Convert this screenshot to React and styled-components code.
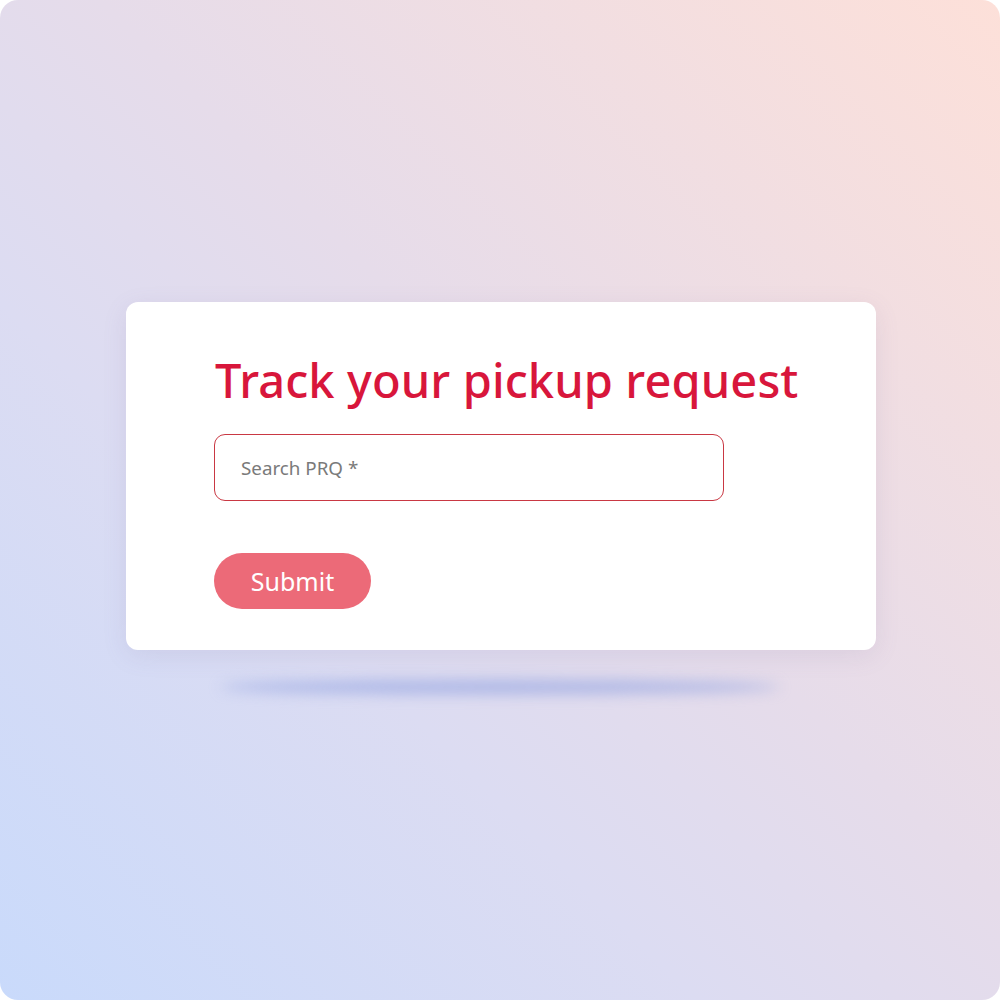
import React from "react";
import styled, { createGlobalStyle } from "styled-components";

const GlobalStyle = createGlobalStyle`
  html, body {
    margin: 0;
    padding: 0;
    background: #ffffff;
  }
  * {
    box-sizing: border-box;
  }
`;

const Page = styled.div`
  width: 1000px;
  height: 1000px;
  border-radius: 18px;
  overflow: hidden;
  background: linear-gradient(45deg, #c9dafb 0%, #dcdcf2 35%, #e6dcea 55%, #fde0d9 100%);
  display: flex;
  flex-direction: column;
  align-items: center;
  padding-top: 302px;
  font-family: "Noto Sans", "Open Sans", sans-serif;
`;

const Card = styled.div`
  width: 750px;
  height: 348px;
  margin-left: 2px;
  background: #ffffff;
  border-radius: 12px;
  box-shadow: 0 6px 24px rgba(120, 110, 160, 0.12);
  padding: 46px 0 0 88px;
  display: flex;
  flex-direction: column;
  align-items: flex-start;
`;

const Title = styled.h1`
  margin: 0 0 0 1px;
  font-size: 47px;
  font-weight: 500;
  line-height: 64px;
  letter-spacing: 0.1px;
  color: #d8163b;
`;

const Field = styled.input`
  margin-top: 22px;
  width: 510px;
  height: 67px;
  border: 1.5px solid #c93843;
  border-radius: 11px;
  padding: 0 26px;
  font-family: "Noto Sans", "Open Sans", sans-serif;
  font-size: 18.8px;
  color: #333;
  outline: none;
  background: #fff;

  &::placeholder {
    color: #7a7a7a;
  }
`;

const SubmitButton = styled.button`
  margin-top: 52px;
  width: 157px;
  height: 56px;
  border: none;
  border-radius: 28px;
  background: #ec6a78;
  color: #ffffff;
  font-family: "Noto Sans", "Open Sans", sans-serif;
  font-size: 25px;
  font-weight: 400;
  cursor: pointer;
`;

const Glow = styled.div`
  margin-top: 30px;
  width: 560px;
  height: 14px;
  border-radius: 50%;
  background: rgba(150, 165, 225, 0.7);
  filter: blur(7px);
`;

const App = () => {
  return (
    <>
      <GlobalStyle />
      <Page>
        <Card>
          <Title>Track your pickup request</Title>
          <Field placeholder="Search PRQ *" />
          <SubmitButton>Submit</SubmitButton>
        </Card>
        <Glow />
      </Page>
    </>
  );
};

export default App;
